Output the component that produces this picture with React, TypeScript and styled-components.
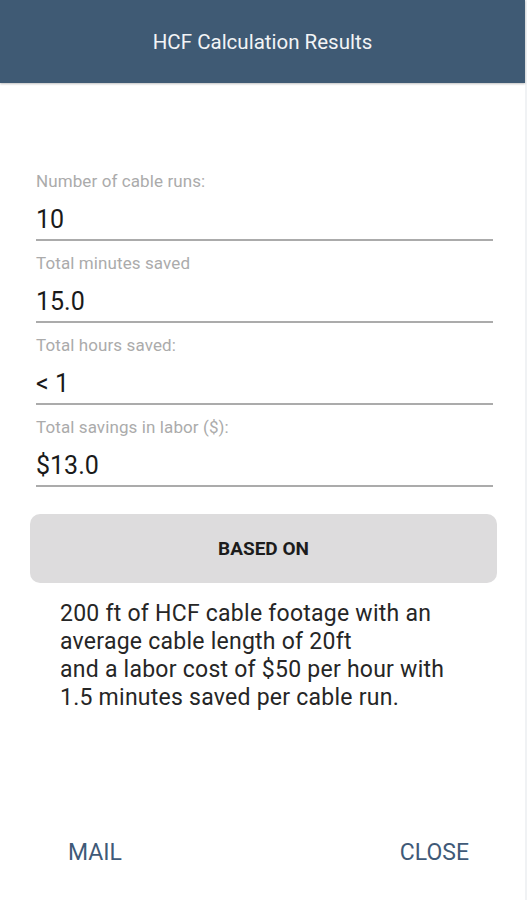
import React from 'react';
import styled, { createGlobalStyle } from 'styled-components';

const GlobalStyle = createGlobalStyle`
  html, body {
    margin: 0;
    padding: 0;
    background: #ffffff;
    font-family: Roboto, "Noto Sans", "Liberation Sans", sans-serif;
  }
  * {
    box-sizing: border-box;
  }
`;

const fields = [
  { label: 'Number of cable runs:', value: '10' },
  { label: 'Total minutes saved', value: '15.0' },
  { label: 'Total hours saved:', value: '< 1' },
  { label: 'Total savings in labor ($):', value: '$13.0' },
];

const summary =
  '200 ft of HCF cable footage with an average cable length of 20ft\nand a labor cost of $50 per hour with 1.5 minutes saved per cable run.';

const App: React.FC = () => {
  return (
    <>
      <GlobalStyle />
      <Page>
        <Header>
          <Title>HCF Calculation Results</Title>
        </Header>
        <Form>
          {fields.map((f) => (
            <Field key={f.label}>
              <Label>{f.label}</Label>
              <Value>{f.value}</Value>
            </Field>
          ))}
        </Form>
        <BasedOn>
          <BasedOnBar>BASED ON</BasedOnBar>
        </BasedOn>
        <Summary>{summary}</Summary>
        <Footer>
          <ActionButton>MAIL</ActionButton>
          <ActionButton>CLOSE</ActionButton>
        </Footer>
      </Page>
    </>
  );
};

const Page = styled.div`
  display: flex;
  flex-direction: column;
  min-height: 100vh;
  border-right: 2px solid #f0f2f4;
`;

const Header = styled.header`
  height: 83px;
  display: flex;
  align-items: center;
  justify-content: center;
  background-color: #3f5a74;
  box-shadow: 0 1px 2px rgba(0, 0, 0, 0.25);
`;

const Title = styled.h1`
  margin: 0;
  font-size: 20.5px;
  font-weight: 400;
  color: #f2f4f6;
`;

const Form = styled.div`
  display: flex;
  flex-direction: column;
  padding: 88px 32px 0 36px;
`;

const Field = styled.div`
  display: flex;
  flex-direction: column;
  margin-bottom: 12px;
  border-bottom: 2px solid #ababab;
  padding-bottom: 4px;
`;

const Label = styled.div`
  font-size: 17px;
  line-height: 20px;
  color: #ababab;
  letter-spacing: 0.1px;
`;

const Value = styled.div`
  margin-top: 14px;
  font-size: 25px;
  line-height: 30px;
  color: #1a1a1a;
`;

const BasedOn = styled.div`
  padding: 15px 28px 0 30px;
`;

const BasedOnBar = styled.div`
  height: 69px;
  border-radius: 10px;
  background-color: #dddcdd;
  display: flex;
  align-items: center;
  justify-content: center;
  font-size: 19px;
  font-weight: 700;
  color: #1c1c1c;
`;

const Summary = styled.p`
  margin: 17px 0 0 0;
  padding: 0 56px 0 60px;
  font-size: 23px;
  line-height: 28px;
  letter-spacing: 0.25px;
  color: #262626;
  white-space: pre-line;
`;

const Footer = styled.footer`
  margin-top: auto;
  height: 96px;
  display: flex;
  align-items: center;
  justify-content: space-between;
  padding: 0 56px 0 68px;
`;

const ActionButton = styled.button`
  border: none;
  background: none;
  padding: 0;
  font-family: inherit;
  font-size: 23px;
  color: #3f5a78;
  cursor: pointer;
`;

export default App;
